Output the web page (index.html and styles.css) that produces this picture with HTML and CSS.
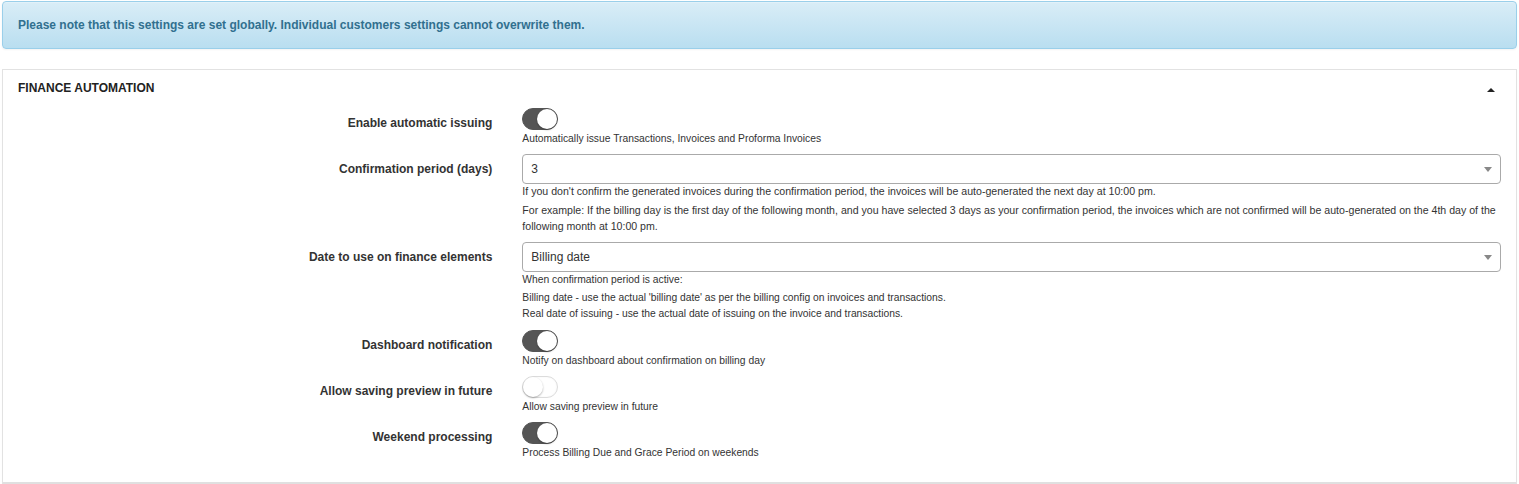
FILE: index.html
```html
<!DOCTYPE html>
<html>
<head>
<meta charset="utf-8">
<link rel="stylesheet" href="styles.css">
</head>
<body>
<div class="page">
  <div class="alert">Please note that this settings are set globally. Individual customers settings cannot overwrite them.</div>

  <div class="panel">
    <div class="panel-heading">
      <span class="panel-title">FINANCE AUTOMATION</span>
      <span class="caret-up"></span>
    </div>
    <div class="panel-body">
      <div class="row">
        <div class="label">Enable automatic issuing</div>
        <div class="control">
          <div class="toggle-wrap"><span class="toggle on"><span class="knob"></span></span></div>
          <div class="help">Automatically issue Transactions, Invoices and Proforma Invoices</div>
        </div>
      </div>

      <div class="row">
        <div class="label">Confirmation period (days)</div>
        <div class="control">
          <div class="select"><span>3</span><span class="arrow"></span></div>
          <div class="help wide first">If you don't confirm the generated invoices during the confirmation period, the invoices will be auto-generated the next day at 10:00 pm.</div>
          <div class="help wide multi">For example: If the billing day is the first day of the following month, and you have selected 3 days as your confirmation period, the invoices which are not confirmed will be auto-generated on the 4th day of the following month at 10:00 pm.</div>
        </div>
      </div>

      <div class="row">
        <div class="label">Date to use on finance elements</div>
        <div class="control">
          <div class="select"><span>Billing date</span><span class="arrow"></span></div>
          <div class="help first">When confirmation period is active:</div>
          <div class="help multi">Billing date - use the actual 'billing date' as per the billing config on invoices and transactions.<br>Real date of issuing - use the actual date of issuing on the invoice and transactions.</div>
        </div>
      </div>

      <div class="row">
        <div class="label">Dashboard notification</div>
        <div class="control">
          <div class="toggle-wrap"><span class="toggle on"><span class="knob"></span></span></div>
          <div class="help">Notify on dashboard about confirmation on billing day</div>
        </div>
      </div>

      <div class="row">
        <div class="label">Allow saving preview in future</div>
        <div class="control">
          <div class="toggle-wrap"><span class="toggle off"><span class="knob"></span></span></div>
          <div class="help">Allow saving preview in future</div>
        </div>
      </div>

      <div class="row">
        <div class="label">Weekend processing</div>
        <div class="control">
          <div class="toggle-wrap"><span class="toggle on"><span class="knob"></span></span></div>
          <div class="help">Process Billing Due and Grace Period on weekends</div>
        </div>
      </div>
    </div>
  </div>
</div>
</body>
</html>
```
FILE: styles.css
```css
* { box-sizing: border-box; }
html, body { margin: 0; padding: 0; background: #fff; }
body {
  font-family: "Liberation Sans", Arial, Helvetica, sans-serif;
  color: #333;
  font-size: 12px;
}
.page {
  padding: 1px 2px 0 2px;
}
.alert {
  background: linear-gradient(to bottom, #d9edf7 0%, #b9def0 100%);
  border: 1px solid #9acfea;
  border-radius: 4px;
  color: #31708f;
  font-weight: bold;
  font-size: 12px;
  line-height: 16px;
  padding: 15px 15px 15px 15px;
  box-shadow: inset 0 1px 0 rgba(255,255,255,.25), 0 1px 2px rgba(0,0,0,.05);
}
.panel {
  margin-top: 20px;
  border: 1px solid #e2e2e2;
  border-bottom: 2px solid #e0e0e0;
  background: #fff;
  box-shadow: 0 1px 1px rgba(0,0,0,.04);
}
.panel-heading {
  display: flex;
  align-items: center;
  justify-content: space-between;
  padding: 9px 15px 11px 15px;
  height: 38px;
}
.panel-title {
  font-weight: bold;
  font-size: 12px;
  line-height: 16px;
  color: #222;
}
.caret-up {
  width: 0;
  height: 0;
  border-left: 4px solid transparent;
  border-right: 4px solid transparent;
  border-bottom: 4px solid #222;
  margin-right: 6px;
  margin-top: 3px;
}
.panel-body {
  padding: 0 15px 14px 15px;
}
.row {
  display: flex;
  margin: 0 -15px 8px -15px;
}
.label {
  width: 33.3333%;
  flex: none;
  padding: 7px 15px 0 15px;
  text-align: right;
  font-weight: bold;
  font-size: 12px;
  line-height: 16px;
  color: #333;
}
.control {
  flex: 1;
  padding: 0 15px;
  min-width: 0;
}
.toggle-wrap {
  height: 23px;
}
.toggle {
  display: block;
  position: relative;
  width: 36px;
  height: 22px;
  border-radius: 11px;
}
.toggle.on {
  background: #555;
  border: 1px solid #555;
}
.toggle.off {
  background: #fff;
  border: 1px solid #dcdcdc;
  box-shadow: inset 0 0 2px rgba(0,0,0,.05);
}
.knob {
  position: absolute;
  top: 0;
  width: 20px;
  height: 20px;
  border-radius: 50%;
  background: #fff;
  box-shadow: 0 1px 2px rgba(0,0,0,.3);
}
.toggle.on .knob { right: 0; }
.toggle.off .knob { left: 0; }
.select {
  display: flex;
  align-items: center;
  justify-content: space-between;
  height: 30px;
  border: 1px solid #aaa;
  border-radius: 4px;
  padding: 0 8px 0 8px;
  font-size: 12px;
  color: #333;
  background: #fff;
}
.arrow {
  width: 0;
  height: 0;
  border-left: 4px solid transparent;
  border-right: 4px solid transparent;
  border-top: 5px solid #888;
  margin-right: 0;
  margin-top: 1px;
}
.help {
  font-size: 10.3px;
  line-height: 15px;
  color: #333;
}
.help.wide {
  font-size: 10.6px;
}
.help.first {
  margin-bottom: 3px;
}
.help.multi {
  line-height: 16px;
}
```
